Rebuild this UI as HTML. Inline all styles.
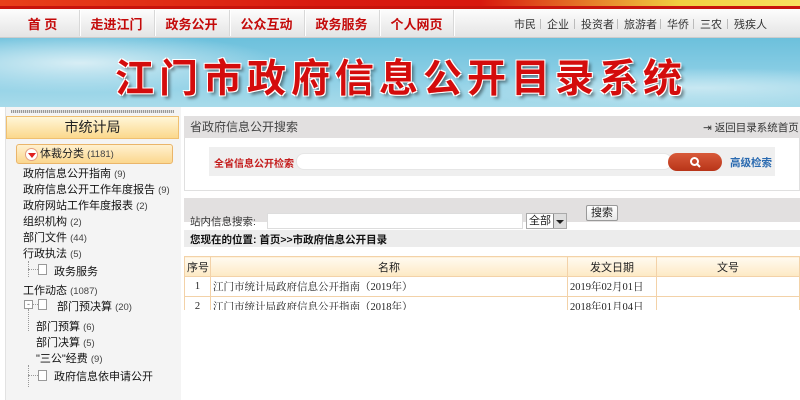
<!DOCTYPE html>
<html><head><meta charset="utf-8"><style>
*{margin:0;padding:0;box-sizing:border-box}
body{width:800px;height:400px;overflow:hidden;background:#fff;font-family:"Liberation Sans","Noto Sans CJK SC",sans-serif;font-size:12px;color:#222;position:relative}
.a{position:absolute;white-space:nowrap}
#top{left:0;top:0;width:800px;height:9px;background:linear-gradient(90deg,#e8401a,#d81a10 40%,#d8180e 60%,#f0d040 85%,#f8e060)}
#top2{left:0;top:6px;width:800px;height:3px;background:#c8140c}
#nav{left:0;top:9px;width:800px;height:29px;background:linear-gradient(#fdfdfd,#e4e4e4);border-bottom:1px solid #ccc}
.n{top:14px;font-size:13px;font-weight:bold;color:#c40a0a;width:75px;text-align:center}
.sep{top:10px;width:2px;height:26px;border-left:1px solid #d8d8d8;border-right:1px solid #fff}
.r{top:16px;font-size:11px;color:#333}
.rs{top:19px;width:1px;height:10px;background:#bbb}
#ban{left:0;top:38px;width:800px;height:69px;background:radial-gradient(ellipse 200px 30px at 80px 25px,#d8eef5,transparent),radial-gradient(ellipse 250px 20px at 700px 50px,#c8e8f2,transparent),linear-gradient(#6cc0dc,#8fd0e6 60%,#a8dbea)}
#bt{left:115px;top:48px;font-size:39px;font-weight:bold;color:#d40c0c;letter-spacing:5px;text-shadow:1px 1px 0 #fff,-1px -1px 0 #fff,1px -1px 0 #fff,-1px 1px 0 #fff,3px 3px 3px rgba(0,0,0,.45)}
#side{left:5px;top:107px;width:176px;height:293px;background:#f4f4f4;border-left:1px solid #e2e2e2}
#dot{left:11px;top:110px;width:163px;height:3px;background:repeating-linear-gradient(90deg,#999 0 1px,#ddd 1px 2px)}
#st{left:6px;top:116px;width:173px;height:23px;background:linear-gradient(#fff6d8,#fbd88c);border:1px solid #f0c070;text-align:center;font-size:14px;line-height:21px;color:#222}
#cat{left:16px;top:144px;width:157px;height:20px;background:linear-gradient(#fff1d0,#fbd78e);border:1px solid #eab56a;border-radius:3px;font-size:11px;line-height:18px;padding-left:23px}
#ci{left:25px;top:148px;width:13px;height:13px;border-radius:50%;background:#fff;border:1px solid #e4a080}
#ci:after{content:"";position:absolute;left:2px;top:4px;border-left:4px solid transparent;border-right:4px solid transparent;border-top:5px solid #e02020}
.li{left:23px;font-size:11px;color:#111}
.li small,#cat small{font-size:9.5px;color:#444}
.ic{width:9px;height:11px;border:1px solid #999;background:#fff}
.vl{width:0;border-left:1px dotted #999}
.hl{height:0;border-top:1px dotted #999}
#rh{left:184px;top:116px;width:616px;height:22px;background:#e2e0e0;font-size:12px;color:#444;padding:0 6px;line-height:22px}
#rb{left:184px;top:138px;width:616px;height:53px;border:1px solid #e0e0e0;border-top:0}
#srow{left:209px;top:147px;width:566px;height:29px;background:#efefef}
#inp{left:296px;top:153px;width:376px;height:17px;background:#fff;border:1px solid #e6e6e6;border-radius:8px}
#btn{left:668px;top:153px;width:54px;height:18px;background:linear-gradient(#d85a3a,#b83418);border-radius:9px}
#g2{left:184px;top:198px;width:616px;height:24px;background:#e2e0e0}
#g3{left:184px;top:222px;width:616px;height:8px;background:#fff}
#g4{left:184px;top:230px;width:616px;height:17px;background:#ececec}
table{position:absolute;left:184px;top:256px;width:616px;border-collapse:collapse;font-size:10.5px;table-layout:fixed}
td{border:1px solid #f3d2a8;height:20px;padding:0 2px;font-family:"Liberation Serif","Noto Serif CJK SC",serif;white-space:nowrap;overflow:hidden}
tr.h td{background:linear-gradient(#fffaf0,#fde9c4);text-align:center;font-family:"Liberation Sans","Noto Sans CJK SC",sans-serif;font-size:11px}
</style></head><body>
<div class="a" id="top"></div><div class="a" id="top2"></div>
<div class="a" id="nav"></div>
<div class="a n" style="left:5px">首 页</div><div class="a sep" style="left:79px"></div>
<div class="a n" style="left:79px">走进江门</div><div class="a sep" style="left:154px"></div>
<div class="a n" style="left:154px">政务公开</div><div class="a sep" style="left:229px"></div>
<div class="a n" style="left:229px">公众互动</div><div class="a sep" style="left:304px"></div>
<div class="a n" style="left:304px">政务服务</div><div class="a sep" style="left:379px"></div>
<div class="a n" style="left:379px">个人网页</div><div class="a sep" style="left:453px"></div>
<div class="a r" style="left:514px">市民</div><div class="a rs" style="left:540px"></div>
<div class="a r" style="left:547px">企业</div><div class="a rs" style="left:574px"></div>
<div class="a r" style="left:581px">投资者</div><div class="a rs" style="left:617px"></div>
<div class="a r" style="left:624px">旅游者</div><div class="a rs" style="left:660px"></div>
<div class="a r" style="left:667px">华侨</div><div class="a rs" style="left:693px"></div>
<div class="a r" style="left:700px">三农</div><div class="a rs" style="left:727px"></div>
<div class="a r" style="left:734px">残疾人</div>
<div class="a" id="ban"></div>
<div class="a" id="bt">江门市政府信息公开目录系统</div>
<div class="a" id="side"></div><div class="a" id="dot"></div>
<div class="a" id="st">市统计局</div>
<div class="a" id="cat">体裁分类 <small>(1181)</small></div><div class="a" id="ci"></div>
<div class="a li" style="top:165px">政府信息公开指南 <small>(9)</small></div>
<div class="a li" style="top:181px">政府信息公开工作年度报告 <small>(9)</small></div>
<div class="a li" style="top:197px">政府网站工作年度报表 <small>(2)</small></div>
<div class="a li" style="top:213px">组织机构 <small>(2)</small></div>
<div class="a li" style="top:229px">部门文件 <small>(44)</small></div>
<div class="a li" style="top:245px">行政执法 <small>(5)</small></div>
<div class="a vl" style="left:28px;top:261px;height:16px"></div><div class="a hl" style="left:28px;top:269px;width:10px"></div>
<div class="a ic" style="left:38px;top:264px"></div>
<div class="a li" style="left:54px;top:263px">政务服务</div>
<div class="a li" style="top:282px">工作动态 <small>(1087)</small></div>
<div class="a" style="left:24px;top:300px;width:9px;height:9px;border:1px solid #999;background:#fff;font-size:9px;line-height:6px;text-align:center;color:#666">-</div>
<div class="a hl" style="left:33px;top:304px;width:5px"></div>
<div class="a vl" style="left:28px;top:309px;height:22px"></div>
<div class="a ic" style="left:38px;top:299px"></div>
<div class="a li" style="left:57px;top:298px">部门预决算 <small>(20)</small></div>
<div class="a li" style="left:36px;top:318px">部门预算 <small>(6)</small></div>
<div class="a li" style="left:36px;top:334px">部门决算 <small>(5)</small></div>
<div class="a li" style="left:36px;top:350px">"三公"经费 <small>(9)</small></div>
<div class="a vl" style="left:28px;top:365px;height:22px"></div><div class="a hl" style="left:28px;top:375px;width:10px"></div>
<div class="a ic" style="left:38px;top:370px"></div>
<div class="a li" style="left:54px;top:368px">政府信息依申请公开</div>
<div class="a" id="rh">省政府信息公开搜索</div>
<div class="a" style="left:703px;top:120px;font-size:10.5px;color:#333">⇥ 返回目录系统首页</div>
<div class="a" id="rb"></div><div class="a" id="srow"></div>
<div class="a" id="inp"></div><div class="a" id="btn"></div>
<div class="a" style="left:214px;top:155px;font-size:10px;font-weight:bold;color:#c41c1c">全省信息公开检索</div>
<svg class="a" style="left:689px;top:156px" width="13" height="13"><circle cx="5.5" cy="5.5" r="3.5" stroke="#fff" stroke-width="2" fill="none"/><line x1="8" y1="8" x2="11" y2="11" stroke="#fff" stroke-width="2"/></svg>
<div class="a" style="left:730px;top:155px;font-size:10.5px;font-weight:bold;color:#2a6ab0">高级检索</div>
<div class="a" id="g2"></div><div class="a" id="g3"></div><div class="a" id="g4"></div>
<div class="a" style="left:190px;top:214px;font-size:10.5px;color:#333">站内信息搜索:</div>
<div class="a" style="left:267px;top:213px;width:256px;height:16px;background:#fff;border:1px solid #ddd"></div>
<div class="a" style="left:526px;top:213px;width:41px;height:16px;background:#fff;border:1px solid #aaa;font-size:11px;padding-left:2px;line-height:14px">全部</div>
<div class="a" style="left:553px;top:214px;width:13px;height:14px;background:#ddd;border-left:1px solid #888"></div>
<div class="a" style="left:556px;top:220px;border-left:4px solid transparent;border-right:4px solid transparent;border-top:4px solid #222"></div>
<div class="a" style="left:586px;top:205px;width:32px;height:16px;background:linear-gradient(#fff,#e8e8e8);border:1px solid #999;border-radius:2px;font-size:11px;text-align:center;line-height:14px">搜索</div>
<div class="a" style="left:190px;top:232px;font-size:10.5px;font-weight:bold;color:#111">您现在的位置: 首页&gt;&gt;市政府信息公开目录</div>
<table>
<colgroup><col style="width:26px"><col style="width:357px"><col style="width:89px"><col></colgroup>
<tr class="h"><td>序号</td><td>名称</td><td>发文日期</td><td>文号</td></tr>
<tr><td style="text-align:center">1</td><td>江门市统计局政府信息公开指南（2019年）</td><td>2019年02月01日</td><td></td></tr>
<tr><td style="text-align:center">2</td><td>江门市统计局政府信息公开指南（2018年）</td><td>2018年01月04日</td><td></td></tr>
</table>
<div class="a" style="left:184px;top:310px;width:616px;height:90px;background:#fff"></div>
</body></html>
